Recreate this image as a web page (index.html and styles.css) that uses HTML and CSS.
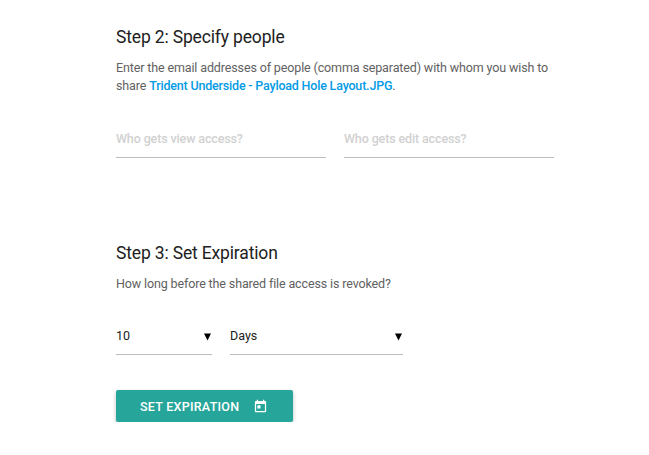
FILE: index.html
```html
<!DOCTYPE html>
<html lang="en">
<head>
    <meta charset="UTF-8">
    <meta name="viewport" content="width=device-width, initial-scale=1.0">
    <title>Share File</title>
    <link rel="stylesheet" href="styles.css">
</head>
<body>

<form class="container">
    <section class="step step-people">
        <h2>Step 2: Specify people</h2>
        <p>Enter the email addresses of people (comma separated) with whom you wish to<br>share <a href="#">Trident Underside - Payload Hole Layout.JPG</a>.</p>
        <div class="people-row">
            <input type="text" class="field" placeholder="Who gets view access?">
            <input type="text" class="field" placeholder="Who gets edit access?">
        </div>
    </section>

    <section class="step">
        <h2>Step 3: Set Expiration</h2>
        <p>How long before the shared file access is revoked?</p>
        <div class="expire-row">
            <div class="select">
                <span>10</span>
                <svg class="caret" viewBox="0 0 8 8"><path d="M0 0h8L4 8z"/></svg>
            </div>
            <div class="select">
                <span>Days</span>
                <svg class="caret" viewBox="0 0 8 8"><path d="M0 0h8L4 8z"/></svg>
            </div>
        </div>
        <button type="button" class="btn">
            <span>Set Expiration</span>
            <svg class="icon" viewBox="0 0 24 24"><path d="M19 3h-1V1h-2v2H8V1H6v2H5c-1.11 0-1.99.9-1.99 2L3 19c0 1.1.89 2 2 2h14c1.1 0 2-.9 2-2V5c0-1.1-.9-2-2-2zm0 16H5V8h14v11zM7 10h5v5H7z"/></svg>
        </button>
    </section>
</form>

</body>
</html>
```

FILE: styles.css
```css
body {
    margin: 0;
    font-family: Roboto, "Liberation Sans", sans-serif;
    font-size: 12.5px;
    letter-spacing: -0.13px;
    background-color: #fff;
    color: #212121;
}
.container {
    width: 438px;
    margin-left: 116px;
    padding-top: 25px;
}
.step-people {
    height: 216px;
}
h2 {
    margin: 0;
    font-size: 17.5px;
    font-weight: 400;
    line-height: 24px;
    letter-spacing: -0.16px;
    white-space: nowrap;
}
p {
    margin: 10px 0 0;
    line-height: 18px;
    color: #616161;
    white-space: nowrap;
}
a {
    color: #039be5;
    font-weight: 500;
    letter-spacing: -0.19px;
    text-decoration: none;
}
.people-row {
    display: grid;
    grid-template-columns: 1fr 1fr;
    gap: 18px;
    margin-top: 24px;
}
.field {
    box-sizing: border-box;
    width: 100%;
    height: 39px;
    padding: 0;
    border: none;
    border-bottom: 1px solid #bdbdbd;
    background: none;
    font: inherit;
    letter-spacing: inherit;
    outline: none;
}
.field::placeholder {
    color: #d1d1d1;
    font-weight: 500;
    opacity: 1;
}
.expire-row {
    display: grid;
    grid-template-columns: 96px 173px;
    gap: 18px;
    margin-top: 24px;
}
.select {
    display: flex;
    align-items: center;
    justify-content: space-between;
    box-sizing: border-box;
    height: 38px;
    border-bottom: 1px solid #bdbdbd;
    letter-spacing: 0;
}
.caret {
    width: 7px;
    height: 8px;
    margin: 3px 1px 0 0;
    fill: #000;
}
.btn {
    display: flex;
    align-items: center;
    justify-content: space-between;
    width: 177px;
    height: 32px;
    margin-top: 35px;
    padding: 0 25px 0 24px;
    border: none;
    border-radius: 2px;
    background-color: #26a69a;
    box-shadow: 0 2px 4px rgba(0, 0, 0, 0.25);
    color: #fff;
    font: 500 12.5px Roboto, "Liberation Sans", sans-serif;
    letter-spacing: 0.26px;
    text-transform: uppercase;
    white-space: nowrap;
    cursor: pointer;
}
.icon {
    width: 15px;
    height: 15px;
    fill: #fff;
}
```
